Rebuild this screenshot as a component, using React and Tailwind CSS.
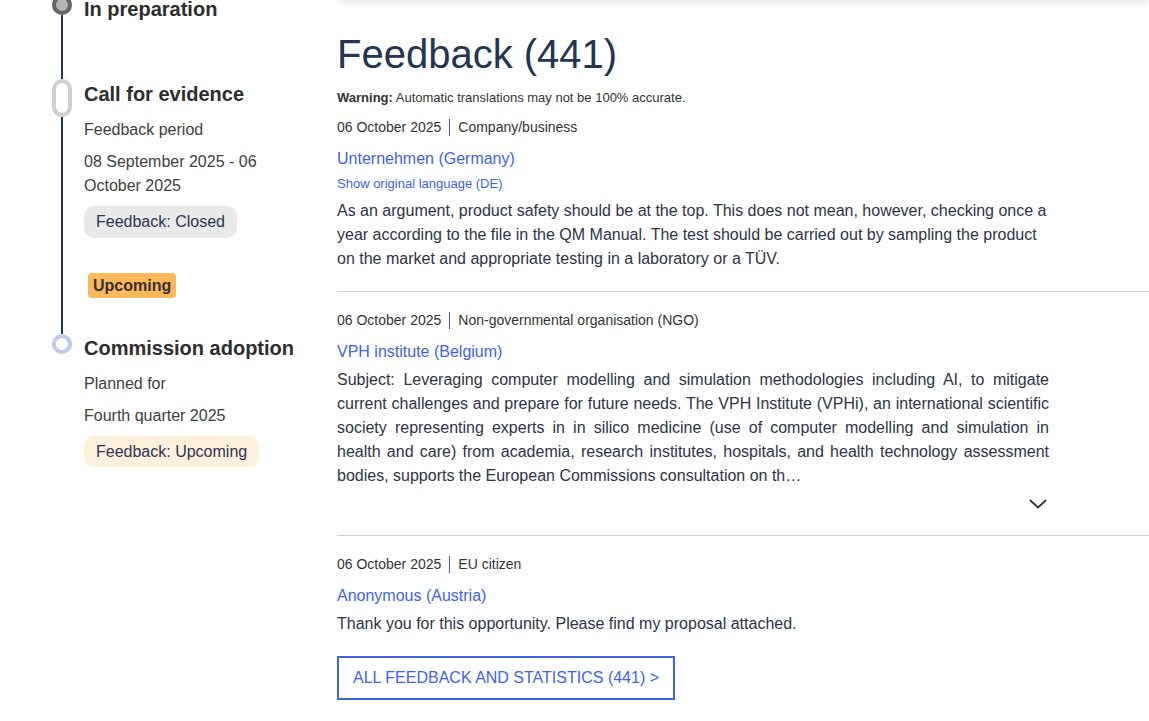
import React from 'react'
import { useState } from 'react'

const font = "font-['Liberation_Sans',Arial,sans-serif]"

function DateRow({ date, type }) {
  return (
    <div className="flex items-center text-[14px] leading-[20px] text-[#333]">
      <span>{date}</span>
      <span className="mx-2 h-[17px] w-px bg-[#3b56c4]" />
      <span>{type}</span>
    </div>
  )
}

function Chevron() {
  return (
    <svg width="20" height="12" viewBox="0 0 20 12" fill="none">
      <polyline points="2,2 10,9.5 18,2" stroke="#333" strokeWidth="1.8" />
    </svg>
  )
}

function Timeline() {
  return (
    <div className="-mt-[5px] w-[337px] shrink-0 pl-[52px] text-[#404040]">
      {/* In preparation */}
      <div className="flex gap-3">
        <div className="flex w-5 flex-col items-center">
          <div className="h-5 w-5 rounded-full border-[4px] border-[#666] bg-[#b5b5b5]" />
          <div className="w-[2px] flex-1 bg-[#243553]" />
        </div>
        <div className="pb-[57px]">
          <h3 className="text-[20px] font-bold leading-[28px] text-[#2d2d2d]">In preparation</h3>
        </div>
      </div>

      {/* Call for evidence */}
      <div className="flex gap-3">
        <div className="flex w-5 flex-col items-center">
          <div className="-mt-px h-[38px] w-5 rounded-full border-[4px] border-[#cfcfcf] bg-white" />
          <div className="w-[2px] flex-1 bg-[#243553]" />
        </div>
        <div className="pb-[36px]">
          <h3 className="text-[20px] font-bold leading-[28px] text-[#2d2d2d]">Call for evidence</h3>
          <p className="mt-[10px] text-[16px] leading-[24px]">Feedback period</p>
          <p className="mt-2 w-[190px] text-[16px] leading-[24px]">08 September 2025 - 06 October 2025</p>
          <div className="mt-[8px] inline-flex h-8 items-center rounded-[10px] bg-[#e9e9e9] px-3 text-[16px] text-[#2b3553]">
            Feedback: Closed
          </div>
          <div>
            <span className="ml-1 mt-[35px] inline-flex h-[25px] items-center rounded-[4px] bg-[#fcb95b] px-[5px] text-[16px] font-bold text-[#333]">
              Upcoming
            </span>
          </div>
        </div>
      </div>

      {/* Commission adoption */}
      <div className="flex gap-3">
        <div className="flex w-5 flex-col items-center">
          <div className="h-5 w-5 rounded-full border-[4px] border-[#bfcaee] bg-white" />
        </div>
        <div>
          <h3 className="text-[20px] font-bold leading-[28px] text-[#2d2d2d]">Commission adoption</h3>
          <p className="mt-[10px] text-[16px] leading-[24px]">Planned for</p>
          <p className="mt-2 text-[16px] leading-[24px]">Fourth quarter 2025</p>
          <div className="mt-[8px] inline-flex h-[31px] items-center rounded-[10px] bg-[#fff0dc] px-3 text-[16px] text-[#2b3553]">
            Feedback: Upcoming
          </div>
        </div>
      </div>
    </div>
  )
}

export default function App() {
  const [open, setOpen] = useState(false)

  return (
    <main className={`${font} flex h-[721px] w-full overflow-hidden bg-white`}>
      <Timeline />

      <section className="min-w-0 flex-1">
        <div className="-mt-4 ml-[3px] h-4 bg-white shadow-[0_2px_7px_rgba(40,50,80,0.13)]" />

        <h2 className="mt-[30px] text-[40px] leading-[48px] text-[#243553]">Feedback (441)</h2>
        <p className="mt-3 text-[13px] leading-[16px] text-[#333]">
          <b>Warning:</b> Automatic translations may not be 100% accurate.
        </p>

        {/* item 1 */}
        <div className="mt-[11px] border-b border-[#d3d3d3] pb-[20px]">
          <DateRow date="06 October 2025" type="Company/business" />
          <a className="mt-[10px] block text-[16px] leading-[24px] text-[#3e63e6]">Unternehmen (Germany)</a>
          <a className="mt-[5px] block text-[13px] leading-[16px] text-[#3e63e6]">Show original language (DE)</a>
          <p className="mt-[7px] max-w-[712px] text-[16px] leading-[24px] text-[#2d3446]">
            As an argument, product safety should be at the top. This does not mean, however, checking once a year according to the file in the QM Manual. The test should be carried out by sampling the product on the market and appropriate testing in a laboratory or a TÜV.
          </p>
        </div>

        {/* item 2 */}
        <div className="border-b border-[#d3d3d3] pb-[19px] pt-[18px]">
          <DateRow date="06 October 2025" type="Non-governmental organisation (NGO)" />
          <a className="mt-[10px] block text-[16px] leading-[24px] text-[#3e63e6]">VPH institute (Belgium)</a>
          <p className="mt-1 max-w-[712px] text-justify text-[16px] leading-[24px] text-[#2d3446]">
            Subject: Leveraging computer modelling and simulation methodologies including AI, to mitigate current challenges and prepare for future needs. The VPH Institute (VPHi), an international scientific society representing experts in in silico medicine (use of computer modelling and simulation in health and care) from academia, research institutes, hospitals, and health technology assessment bodies, supports the European Commissions consultation on th…
          </p>
          <div className="mt-1 flex h-6 max-w-[712px] items-center justify-end">
            <button onClick={() => setOpen(!open)} className="mr-[1px]">
              <Chevron />
            </button>
          </div>
        </div>

        {/* item 3 */}
        <div className="pt-[18px]">
          <DateRow date="06 October 2025" type="EU citizen" />
          <a className="mt-[10px] block text-[16px] leading-[24px] text-[#3e63e6]">Anonymous (Austria)</a>
          <p className="mt-1 text-[16px] leading-[24px] text-[#2d3446]">
            Thank you for this opportunity. Please find my proposal attached.
          </p>
          <button className="mt-[20px] flex h-[44px] w-[338px] items-center border-2 border-[#3e63e6] pl-[14px] text-[16px] text-[#3e63e6]">
            ALL FEEDBACK AND STATISTICS (441) &gt;
          </button>
        </div>
      </section>
    </main>
  )
}
